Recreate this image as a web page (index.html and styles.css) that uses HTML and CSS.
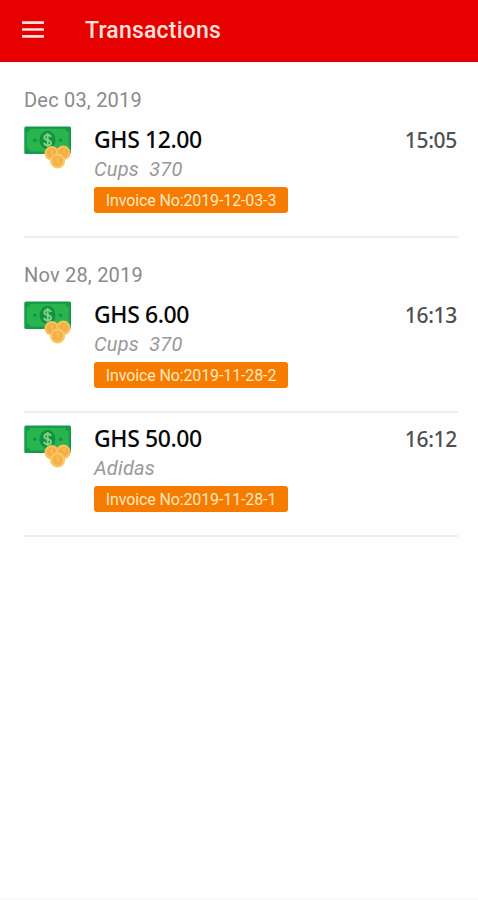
FILE: index.html
```html
<!DOCTYPE html>
<html lang="en">
<head>
<meta charset="utf-8">
<meta name="viewport" content="width=device-width, initial-scale=1">
<title>Transactions</title>
<link rel="stylesheet" href="styles.css">
</head>
<body>
<svg class="defs" width="0" height="0" aria-hidden="true">
  <symbol id="cash" viewBox="0 0 48 44">
    <rect x="0.3" y="0.5" width="46.7" height="27.5" rx="1.5" fill="#15994a"/>
    <path d="M6 2.7H41.5A3.5 3.5 0 0 0 44.8 6V22.3A3.5 3.5 0 0 0 41.5 25.6H6A3.5 3.5 0 0 0 2.7 22.3V6A3.5 3.5 0 0 0 6 2.7Z" fill="#28b54e"/>
    <ellipse cx="23.5" cy="14" rx="8" ry="9.2" fill="#129044"/>
    <circle cx="10.8" cy="14.3" r="1.7" fill="#129044"/>
    <circle cx="36.6" cy="14.3" r="1.7" fill="#129044"/>
    <path d="M27 11C26.5 9.3 25.3 8.8 23.7 8.8C21.7 8.8 20.3 9.8 20.3 11.4C20.3 15 27.2 13.1 27.2 16.8C27.2 18.4 25.7 19.4 23.7 19.4C21.7 19.4 20.4 18.5 20 16.8M23.7 7V21.2" fill="none" stroke="#80d67f" stroke-width="1.8"/>
    <circle cx="27.8" cy="27.3" r="7.3" fill="#f9c15a"/>
    <circle cx="27.8" cy="27.3" r="5" fill="#f4ae45"/>
    <circle cx="39.3" cy="26.8" r="7.3" fill="#f9c15a"/>
    <circle cx="39.3" cy="26.8" r="5" fill="#f4ae45"/>
    <circle cx="33.6" cy="35" r="7.6" fill="#fbc862"/>
    <circle cx="33.6" cy="35" r="5.4" fill="#f5b149"/>
    <path d="M26.6 25.3l1.2-.8v4M39 24.6l1.2-.8v4M32.8 33l1.3-.8v5" fill="none" stroke="#f9c567" stroke-width="1.1"/>
  </symbol>
</svg>
<header class="bar">
  <svg class="menu" viewBox="0 0 22 18"><path d="M0 1.6H22M0 8.5H22M0 15.4H22" stroke="#ffe0dc" stroke-width="2.6"/></svg>
  <h1 class="title">Transactions</h1>
</header>
<main class="list">
  <section>
    <h2 class="date"><span>Dec 03, 2019</span></h2>
    <article class="row">
      <svg class="icon"><use href="#cash"/></svg>
      <div class="info">
        <div class="amount"><span>GHS 12.00</span></div>
        <div class="name">Cups&nbsp; 370</div>
        <div class="tag">Invoice No:2019-12-03-3</div>
      </div>
      <time class="time">15:05</time>
    </article>
  </section>
  <section>
    <h2 class="date"><span>Nov 28, 2019</span></h2>
    <article class="row">
      <svg class="icon"><use href="#cash"/></svg>
      <div class="info">
        <div class="amount"><span>GHS 6.00</span></div>
        <div class="name">Cups&nbsp; 370</div>
        <div class="tag">Invoice No:2019-11-28-2</div>
      </div>
      <time class="time">16:13</time>
    </article>
    <article class="row">
      <svg class="icon"><use href="#cash"/></svg>
      <div class="info">
        <div class="amount"><span>GHS 50.00</span></div>
        <div class="name">Adidas</div>
        <div class="tag">Invoice No:2019-11-28-1</div>
      </div>
      <time class="time">16:12</time>
    </article>
  </section>
</main>
<footer class="foot"></footer>
</body>
</html>
```
FILE: styles.css
```css
* { box-sizing: border-box; }
body {
  margin: 0;
  height: 900px;
  display: flex;
  flex-direction: column;
  background: #fefefe;
  font-family: Roboto, "Liberation Sans", sans-serif;
  overflow: hidden;
}
.defs { display: block; flex: none; width: 0; height: 0; }
.bar {
  flex: none;
  height: 62px;
  display: flex;
  align-items: center;
  padding: 0 22px 2px;
  background: #e60000;
}
.menu { width: 22px; height: 18px; margin-right: 41px; }
.title {
  margin: 0;
  padding-top: 2px;
  font-size: 23px;
  font-weight: 500;
  line-height: 30px;
  letter-spacing: 0.2px;
  color: #ffe0dc;
}
.list { flex: 1; padding: 1px 20px 0 24px; }
.date {
  margin: 0;
  height: 51px;
  padding-top: 25px;
  font-size: 20px;
  font-weight: 400;
  line-height: 24px;
  letter-spacing: 0.2px;
  color: #8a8a8a;
}
.row {
  height: 124px;
  display: flex;
  align-items: flex-start;
  padding: 12px 1px 0 0;
  border-bottom: 2px solid #efefef;
}
.icon { flex: none; width: 48px; height: 44px; margin-right: 22px; }
.info { flex: 1; }
.amount {
  font-family: "Noto Sans", sans-serif;
  font-size: 23px;
  font-weight: 500;
  line-height: 26px;
  letter-spacing: -0.4px;
  padding-bottom: 2px;
  color: #080808;
}
.name {
  font-size: 20px;
  font-style: italic;
  line-height: 24px;
  letter-spacing: 0.2px;
  margin-top: 3px;
  color: #999;
}
.tag {
  width: 194px;
  height: 26px;
  margin-top: 6px;
  border-radius: 3px;
  background: #f57c00;
  color: #ffe8c0;
  font-size: 16px;
  line-height: 27px;
  letter-spacing: -0.12px;
  text-align: center;
  white-space: nowrap;
}
.time {
  font-family: "Noto Sans", sans-serif;
  font-size: 21px;
  font-weight: 500;
  line-height: 29px;
  letter-spacing: -0.3px;
  color: #505050;
}
.foot { flex: none; height: 2px; background: #f8f8f8; }
```
